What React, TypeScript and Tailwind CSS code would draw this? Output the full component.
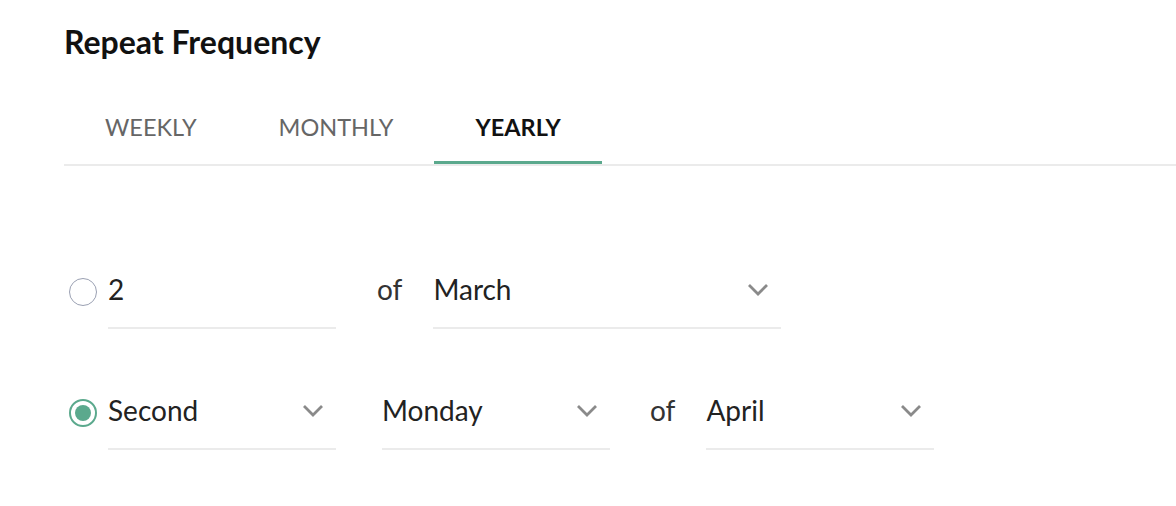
import React, { useState } from "react";

const tabs = ["WEEKLY", "MONTHLY", "YEARLY"];

const Chevron: React.FC = () => (
  <svg width="22" height="13" viewBox="0 0 22 13" fill="none" className="shrink-0">
    <path d="M2 2l9 9 9-9" stroke="#8a8a8a" strokeWidth="2.8" />
  </svg>
);

interface RadioProps {
  checked: boolean;
  onClick: () => void;
}

const Radio: React.FC<RadioProps> = ({ checked, onClick }) => (
  <button
    onClick={onClick}
    className={`w-[28px] h-[28px] rounded-full flex items-center justify-center shrink-0 ${
      checked ? "border-2 border-[#5ba98d]" : "border-[1.5px] border-[#9aa0b2]"
    }`}
  >
    {checked && <span className="w-[16px] h-[16px] rounded-full bg-[#5ba98d]" />}
  </button>
);

interface FieldProps {
  value: string;
  width: string;
  select?: boolean;
}

// underlined input / select look
const Field: React.FC<FieldProps> = ({ value, width, select = false }) => (
  <div
    className={`${width} flex items-center justify-between border-b-2 border-[#ebebeb] pt-[2px] pb-[22px] pr-[12px]`}
  >
    <span className="text-[28px] leading-[32px] text-[#222]">{value}</span>
    {select && <Chevron />}
  </div>
);

const Of: React.FC<{ className?: string }> = ({ className = "" }) => (
  <span className={`text-[28px] leading-[32px] text-[#333] pb-[24px] ${className}`}>of</span>
);

export default function App() {
  const [active, setActive] = useState("YEARLY");
  const [option, setOption] = useState(2);

  return (
    <div className="w-[1176px] h-[506px] bg-white pl-[64px] pt-[22px] font-['Lato',sans-serif]">
      <h1 className="text-[32px] leading-[40px] font-bold text-[#111]">Repeat Frequency</h1>

      <div className="flex mt-[50px] border-b-2 border-[#ebebeb]">
        {tabs.map((t) => (
          <button
            key={t}
            onClick={() => setActive(t)}
            className={`px-[41px] pt-[1px] pb-[20px] text-[23.5px] leading-[28px] border-b-[3px] ${
              active === t
                ? "border-[#5ba98d] text-[#111] font-bold"
                : "border-transparent text-[#666]"
            }`}
          >
            {t}
          </button>
        ))}
      </div>

      <div className="mt-[105px] flex flex-col gap-[63px]">
        <div className="flex items-end">
          <div className="pb-[23px] pl-[5px] pr-[11px]">
            <Radio checked={option === 1} onClick={() => setOption(1)} />
          </div>
          <Field value="2" width="w-[228px]" />
          <Of className="pl-[41px] pr-[31px]" />
          <Field value="March" width="w-[348px]" select />
        </div>

        <div className="flex items-end">
          <div className="pb-[23px] pl-[5px] pr-[11px]">
            <Radio checked={option === 2} onClick={() => setOption(2)} />
          </div>
          <Field value="Second" width="w-[228px]" select />
          <div className="w-[46px]" />
          <Field value="Monday" width="w-[228px]" select />
          <Of className="pl-[40px] pr-[31px]" />
          <Field value="April" width="w-[228px]" select />
        </div>
      </div>
    </div>
  );
}
